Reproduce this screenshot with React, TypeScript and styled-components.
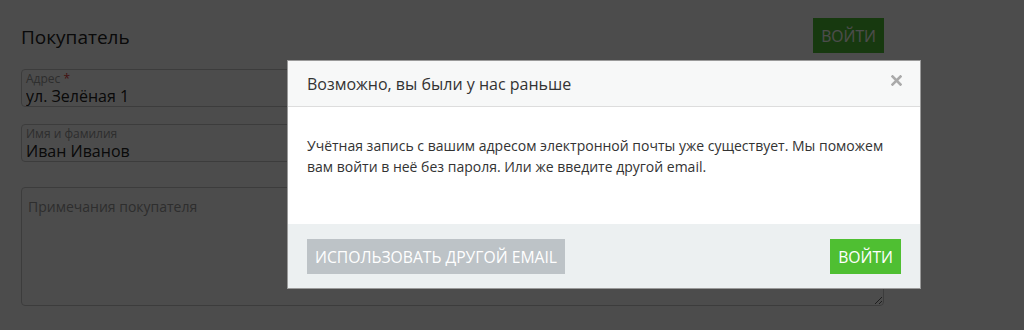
import React from 'react';
import styled, { createGlobalStyle } from 'styled-components';

const font = `'Open Sans', 'Noto Sans', sans-serif`;

const GlobalStyle = createGlobalStyle`
  html, body {
    margin: 0;
    padding: 0;
    background: #ffffff;
    font-family: ${font};
    color: #333333;
  }
`;

const Page = styled.div`
  width: 863px;
  padding: 18px 0 0 21px;
  display: flex;
  flex-direction: column;
`;

const TopBar = styled.div`
  display: flex;
  justify-content: space-between;
  align-items: flex-start;
  height: 51px;
`;

const Heading = styled.h2`
  margin: 5px 0 0;
  font-size: 19px;
  font-weight: 400;
  line-height: 28px;
  color: #222;
`;

const Button = styled.button<{ $variant: 'green' | 'grey' }>`
  height: 35px;
  padding: 0 8px;
  border: none;
  border-radius: 0;
  font-family: ${font};
  font-size: 15.7px;
  text-transform: uppercase;
  color: #ffffff;
  background: ${({ $variant }) => ($variant === 'green' ? '#4fbf32' : '#bdc3c7')};
  cursor: pointer;
`;

const Form = styled.div`
  display: flex;
  flex-direction: column;
  gap: 17px;
`;

const Field = styled.label`
  display: flex;
  flex-direction: column;
  height: 38px;
  box-sizing: border-box;
  padding: 2px 4px 0;
  border: 1px solid #c8c8c8;
  border-radius: 4px;
`;

const FieldLabel = styled.span`
  font-size: 12px;
  line-height: 14px;
  color: #999999;

  & > em {
    font-style: normal;
    color: #e03a3a;
  }
`;

const FieldInput = styled.input`
  border: none;
  outline: none;
  padding: 0;
  margin: 0;
  background: transparent;
  font-family: ${font};
  font-size: 16px;
  line-height: 20px;
  color: #222;
`;

const Notes = styled.textarea`
  margin-top: 8px;
  height: 119px;
  box-sizing: border-box;
  padding: 9px 6px;
  border: 1px solid #c8c8c8;
  border-radius: 4px;
  font-family: ${font};
  font-size: 14px;
  resize: vertical;

  &::placeholder {
    color: #999999;
  }
`;

const Overlay = styled.div`
  position: fixed;
  inset: 0;
  background: rgba(0, 0, 0, 0.7);
`;

const Modal = styled.div`
  position: fixed;
  top: 60px;
  left: 287px;
  width: 634px;
  box-sizing: border-box;
  border: 1px solid #9a9a9a;
  background: #ffffff;
  display: flex;
  flex-direction: column;
`;

const ModalHeader = styled.div`
  display: flex;
  align-items: center;
  justify-content: space-between;
  height: 46px;
  box-sizing: border-box;
  padding: 0 18px 6px 19px;
  background: #f7f8f8;
  border-bottom: 1px solid #dddddd;
`;

const ModalTitle = styled.h3`
  margin: 6px 0 0;
  font-size: 16px;
  font-weight: 400;
  color: #333;
`;

const CloseButton = styled.button`
  display: flex;
  padding: 0;
  border: none;
  background: none;
  color: #aaaaaa;
  cursor: pointer;
`;

const ModalBody = styled.div`
  padding: 28px 19px 47px;
  font-size: 14px;
  line-height: 21px;
  color: #333;
`;

const ModalFooter = styled.div`
  display: flex;
  justify-content: space-between;
  padding: 15px 19px 14px;
  background: #ecf0f1;
`;

export default function App() {
  return (
    <>
      <GlobalStyle />
      <Page>
        <TopBar>
          <Heading>Покупатель</Heading>
          <Button $variant="green">Войти</Button>
        </TopBar>
        <Form>
          <Field>
            <FieldLabel>
              Адрес <em>*</em>
            </FieldLabel>
            <FieldInput readOnly defaultValue="ул. Зелёная 1" />
          </Field>
          <Field>
            <FieldLabel>Имя и фамилия</FieldLabel>
            <FieldInput readOnly defaultValue="Иван Иванов" />
          </Field>
          <Notes placeholder="Примечания покупателя" />
        </Form>
      </Page>
      <Overlay />
      <Modal>
        <ModalHeader>
          <ModalTitle>Возможно, вы были у нас раньше</ModalTitle>
          <CloseButton aria-label="Закрыть">
            <svg width="11" height="11" viewBox="0 0 11 11">
              <path d="M1.5 1.5l8 8M9.5 1.5l-8 8" stroke="currentColor" strokeWidth="2.6" strokeLinecap="square" />
            </svg>
          </CloseButton>
        </ModalHeader>
        <ModalBody>
          Учётная запись с вашим адресом электронной почты уже существует. Мы поможем вам войти в неё без пароля. Или же
          введите другой email.
        </ModalBody>
        <ModalFooter>
          <Button $variant="grey">Использовать другой email</Button>
          <Button $variant="green">Войти</Button>
        </ModalFooter>
      </Modal>
    </>
  );
}
